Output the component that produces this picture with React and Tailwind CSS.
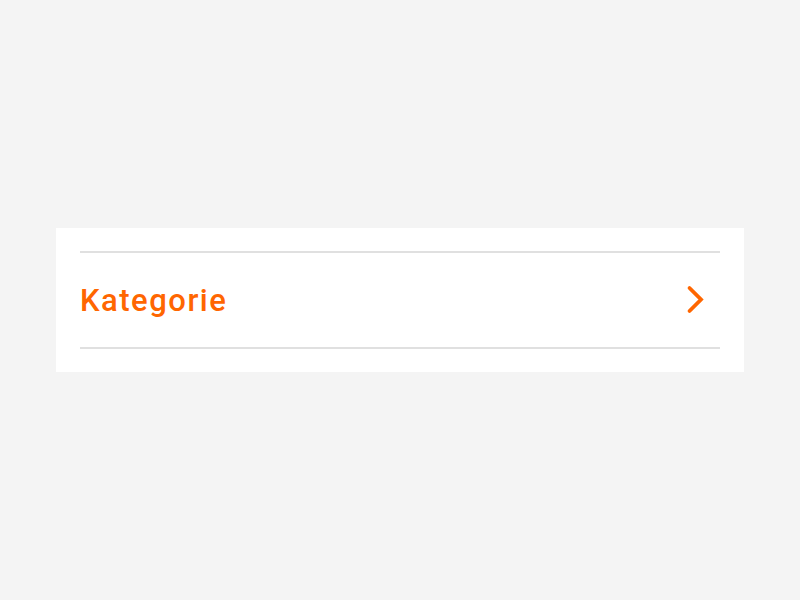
export default function App() {
  return (
    <div className="min-h-[600px] w-full bg-[#f4f4f4] pt-[228px]" style={{ fontFamily: 'Roboto, "Liberation Sans", Arial, sans-serif' }}>
      <div className="mx-[56px] bg-white px-6 py-[23px]">
        <div className="flex h-[98px] items-center justify-between border-y-2 border-[#e0e0e0]">
          <span className="text-[31px] font-medium leading-none tracking-[1.5px] text-[#ff6600]">Kategorie</span>
          <svg width="22" height="32" viewBox="0 0 22 32" fill="none" className="mr-[13px]">
            <path d="M4.5 4 L16 15.5 L4.5 27" stroke="#ff6600" strokeWidth="3.8" strokeLinecap="round" strokeLinejoin="miter" />
          </svg>
        </div>
      </div>
    </div>
  )
}
